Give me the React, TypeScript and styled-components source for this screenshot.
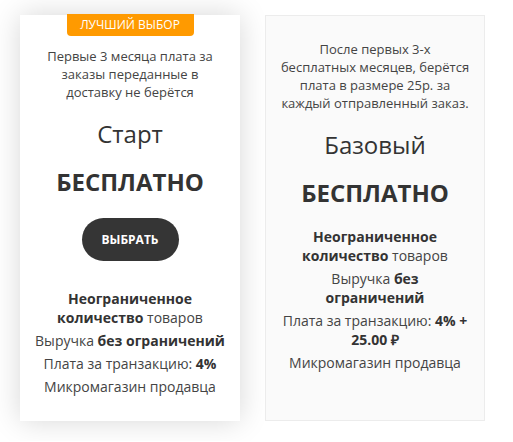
import React from 'react';
import styled, { createGlobalStyle } from 'styled-components';

const GlobalStyle = createGlobalStyle`
  html, body {
    margin: 0;
    padding: 0;
    background: #fff;
  }
  body {
    font-family: 'Open Sans', 'Liberation Sans', sans-serif;
    color: #333;
  }
`;

const Plans = styled.div`
  display: flex;
  align-items: stretch;
  gap: 25px;
  padding: 15px 20px 20px 20px;
`;

const Card = styled.div<{ $featured?: boolean }>`
  width: 220px;
  box-sizing: border-box;
  display: flex;
  flex-direction: column;
  align-items: center;
  text-align: center;
  padding: ${(p) => (p.$featured ? '0 14px 25px' : '24px 14px 25px')};
  background: ${(p) => (p.$featured ? '#fff' : '#fafafa')};
  border: ${(p) => (p.$featured ? 'none' : '1px solid #ececec')};
  box-shadow: ${(p) => (p.$featured ? '0 0 28px rgba(0, 0, 0, 0.16)' : 'none')};
`;

const Badge = styled.div`
  width: 127px;
  height: 22px;
  margin-top: -1px;
  background: #ff9a00;
  color: #fff;
  font-size: 12px;
  line-height: 22px;
  border-radius: 0 0 4px 4px;
`;

const Note = styled.p<{ $featured?: boolean }>`
  margin: ${(p) => (p.$featured ? '11px 0 0' : '0')};
  font-size: 13px;
  line-height: 18px;
  color: #444;
`;

const PlanName = styled.h3`
  margin: 18px 0 0;
  font-size: 24px;
  line-height: 30px;
  font-weight: 400;
  color: #333;
`;

const Price = styled.div`
  margin-top: 17px;
  font-size: 24px;
  line-height: 32px;
  font-weight: 700;
  color: #333;
`;

const ChooseButton = styled.button`
  margin-top: 20px;
  width: 97px;
  height: 43px;
  border: none;
  border-radius: 22px;
  background: #353535;
  color: #fff;
  font-family: inherit;
  font-size: 12px;
  font-weight: 700;
  cursor: pointer;
`;

const Features = styled.ul<{ $featured?: boolean }>`
  list-style: none;
  margin: ${(p) => (p.$featured ? '28px 0 0' : '18px 0 0')};
  padding: ${(p) => (p.$featured ? '0' : '0 2px')};
`;

const Feature = styled.li`
  font-size: 14px;
  line-height: 19px;
  color: #444;
  margin-top: 4px;
  &:first-child {
    margin-top: 0;
  }
  b {
    font-weight: 700;
    color: #333;
  }
`;

export default function App() {
  return (
    <>
      <GlobalStyle />
      <Plans>
        <Card $featured>
          <Badge>ЛУЧШИЙ ВЫБОР</Badge>
          <Note $featured>Первые 3 месяца плата за заказы переданные в доставку не берётся</Note>
          <PlanName>Старт</PlanName>
          <Price>БЕСПЛАТНО</Price>
          <ChooseButton>ВЫБРАТЬ</ChooseButton>
          <Features $featured>
            <Feature><b>Неограниченное количество</b> товаров</Feature>
            <Feature>Выручка <b>без ограничений</b></Feature>
            <Feature>Плата за транзакцию: <b>4%</b></Feature>
            <Feature>Микромагазин продавца</Feature>
          </Features>
        </Card>
        <Card>
          <Note>
            После первых 3-х
            <br />
            бесплатных месяцев, берётся плата в размере 25р. за каждый отправленный заказ.
          </Note>
          <PlanName>Базовый</PlanName>
          <Price>БЕСПЛАТНО</Price>
          <Features>
            <Feature><b>Неограниченное количество</b> товаров</Feature>
            <Feature>Выручка <b>без ограничений</b></Feature>
            <Feature>Плата за транзакцию: <b>4% + 25.00 ₽</b></Feature>
            <Feature>Микромагазин продавца</Feature>
          </Features>
        </Card>
      </Plans>
    </>
  );
}
